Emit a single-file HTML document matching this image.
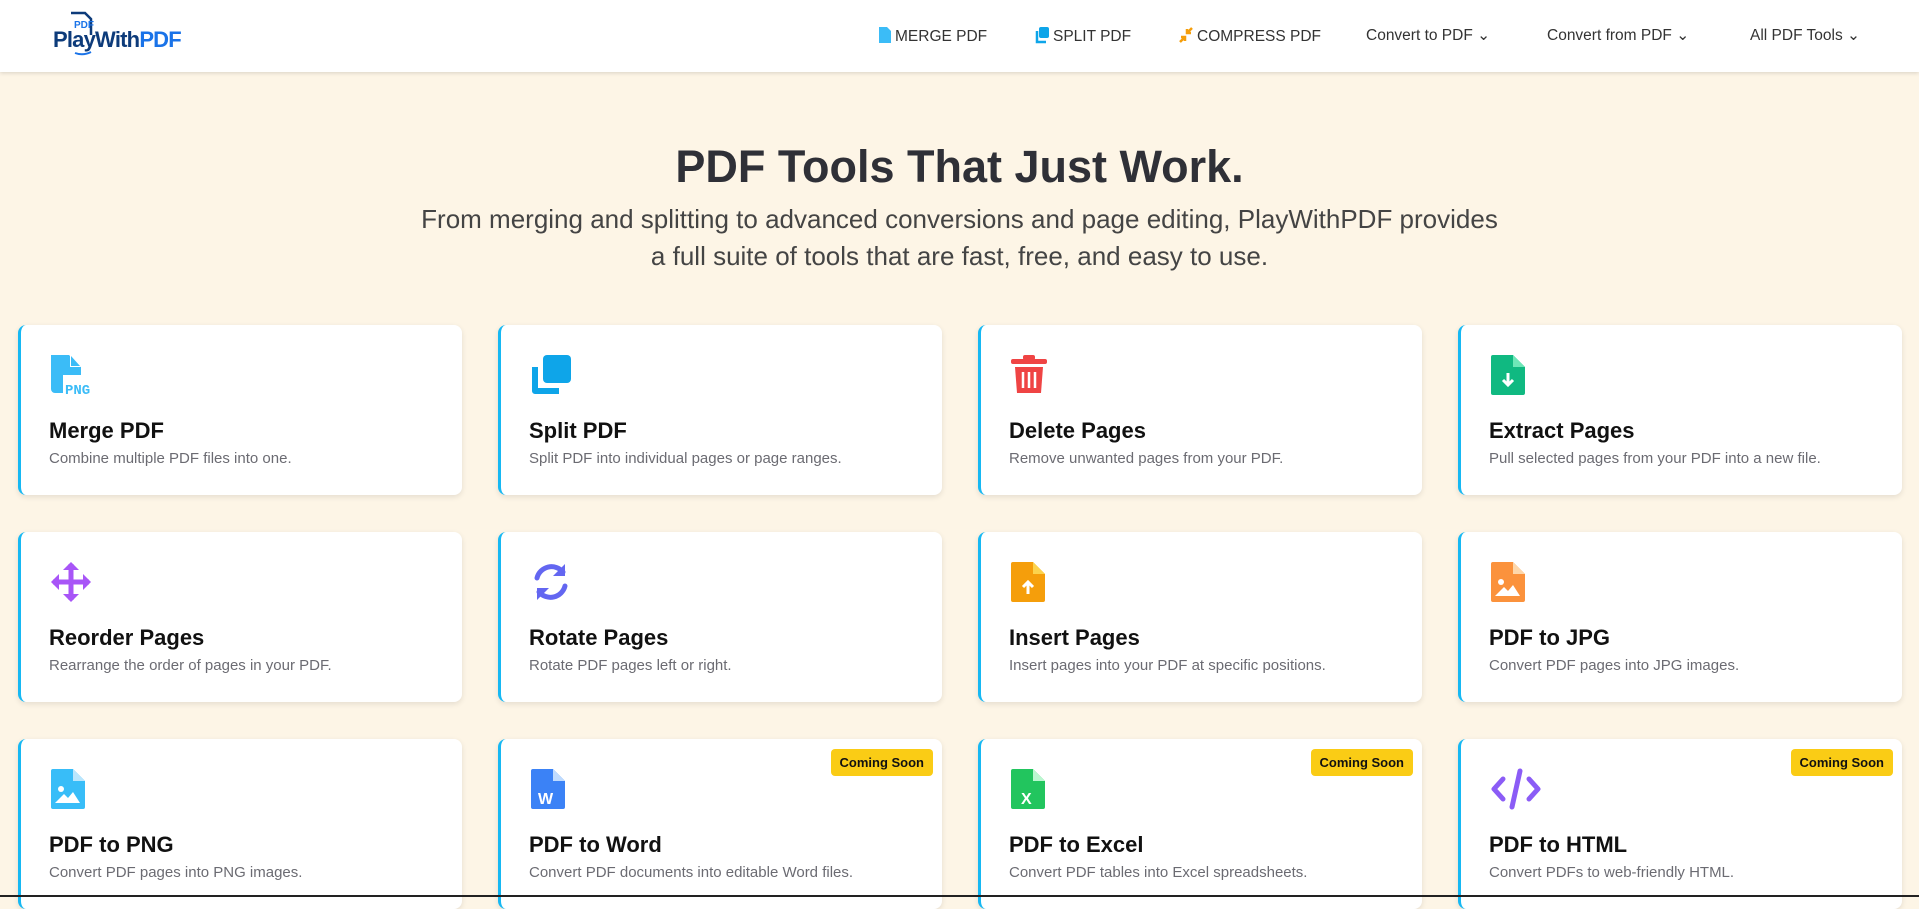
<!DOCTYPE html>
<html><head><meta charset="utf-8"><style>
*{box-sizing:border-box;margin:0;padding:0}
body{width:1919px;height:897px;overflow:hidden;background:#fdf5e6;font-family:"Liberation Sans",sans-serif;position:relative}
.hdr{position:absolute;left:0;top:0;width:1919px;height:72px;background:#fff;box-shadow:0 1px 4px rgba(0,0,0,.15);z-index:2}
.logo{position:absolute;left:53px;top:12px;height:46px}
.logo .t{position:absolute;left:0;top:15px;font-size:22px;font-weight:bold;color:#0d3b7a;letter-spacing:-0.8px;white-space:nowrap}
.logo .t span{color:#1a73e8}
.nav{position:absolute;top:26px;font-size:15.5px;color:#333;white-space:nowrap}
.nav svg{vertical-align:-3px;margin-right:3px}
h1{position:absolute;top:141px;width:100%;text-align:center;font-size:45px;color:#2f3037;font-weight:bold}
.sub{position:absolute;top:201px;width:100%;text-align:center;font-size:26px;line-height:37px;color:#444}
.card{position:absolute;width:444px;height:170px;background:#fff;border-radius:8px;border-left:3px solid #16b8f3;box-shadow:0 2px 6px rgba(0,0,0,.1)}
.card .ic{position:absolute;left:28px;top:28px;width:44px;height:44px}
.card h3{position:absolute;left:28px;top:93px;font-size:22px;color:#111;font-weight:bold}
.card p{position:absolute;left:28px;top:125px;font-size:15px;color:#6b6b72}
.badge{position:absolute;right:9px;top:10px;background:#facc15;border-radius:4px;font-size:13px;font-weight:bold;padding:6px 9px;color:#111}
</style></head><body>
<div class="hdr">
 <div class="logo">
  <svg width="40" height="50" style="position:absolute;left:12px;top:-3px"><path d="M6 4h14l6 6v16" fill="none" stroke="#0d3b7a" stroke-width="2.5"/><text x="9" y="19" font-size="10" font-weight="bold" fill="#1a73e8" font-family="Liberation Sans">PDF</text><path d="M10 44q8 3 16-1" fill="none" stroke="#1a73e8" stroke-width="2"/></svg>
  <div class="t">PlayWith<span>PDF</span></div>
 </div>
 <div class="nav" style="left:878px"><svg width="14" height="18"><path d="M1 1h8l4 4v12H1z" fill="#3bbcf7"/></svg>MERGE PDF</div>
 <div class="nav" style="left:1034px"><svg width="16" height="18"><rect x="5" y="1" width="10" height="11" rx="2" fill="#0ea5e9"/><path d="M3 5v11h9" fill="none" stroke="#0ea5e9" stroke-width="2.5"/></svg>SPLIT PDF</div>
 <div class="nav" style="left:1178px"><svg width="16" height="18"><path d="M14 2l-5 5M9 3v4h4M2 16l5-5M7 15v-4H3" fill="none" stroke="#f59e0b" stroke-width="2.5"/></svg>COMPRESS PDF</div>
 <div class="nav" style="left:1366px">Convert to PDF &#8964;</div>
 <div class="nav" style="left:1547px">Convert from PDF &#8964;</div>
 <div class="nav" style="left:1750px">All PDF Tools &#8964;</div>
</div>
<h1>PDF Tools That Just Work.</h1>
<div class="sub">From merging and splitting to advanced conversions and page editing, PlayWithPDF provides<br>a full suite of tools that are fast, free, and easy to use.</div>

<div class="card" style="left:18px;top:325px"><svg class="ic" viewBox="0 0 44 44"><path d="M2 2h18l12 12v8H14v18H6a4 4 0 0 1-4-4z" fill="#3bbcf7"/><path d="M21 2v12h11z" fill="#fff"/><path d="M22 3v10h9z" fill="#3bbcf7"/><text x="16" y="41" font-size="14" font-weight="bold" fill="#3bbcf7" font-family="Liberation Mono">PNG</text></svg><h3>Merge PDF</h3><p>Combine multiple PDF files into one.</p></div>
<div class="card" style="left:498px;top:325px"><svg class="ic" viewBox="0 0 44 44"><rect x="14" y="2" width="28" height="28" rx="4" fill="#0ea5e9"/><path d="M6 14v24h24" fill="none" stroke="#0ea5e9" stroke-width="6" stroke-linejoin="round"/></svg><h3>Split PDF</h3><p>Split PDF into individual pages or page ranges.</p></div>
<div class="card" style="left:978px;top:325px"><svg class="ic" viewBox="0 0 44 44"><rect x="2" y="6" width="36" height="5" rx="2" fill="#ef4444"/><rect x="14" y="2" width="12" height="5" rx="2" fill="#ef4444"/><path d="M6 14h28l-2 26H8z" fill="#ef4444"/><path d="M14 19v16M20 19v16M26 19v16" stroke="#fff" stroke-width="2.5"/></svg><h3>Delete Pages</h3><p>Remove unwanted pages from your PDF.</p></div>
<div class="card" style="left:1458px;top:325px"><svg class="ic" viewBox="0 0 44 44"><path d="M4 2h20l12 12v26a2 2 0 0 1-2 2H4a2 2 0 0 1-2-2V4a2 2 0 0 1 2-2z" fill="#10b981"/><path d="M24 2v12h12" fill="#6ee7b7"/><path d="M19 20v12M14 27l5 5 5-5" fill="none" stroke="#fff" stroke-width="3"/></svg><h3>Extract Pages</h3><p>Pull selected pages from your PDF into a new file.</p></div>

<div class="card" style="left:18px;top:532px"><svg class="ic" viewBox="0 0 44 44"><path d="M22 4v36M4 22h36" stroke="#a855f7" stroke-width="5"/><path d="M14 10l8-8 8 8zM14 34l8 8 8-8zM10 14l-8 8 8 8zM34 14l8 8-8 8z" fill="#a855f7"/></svg><h3>Reorder Pages</h3><p>Rearrange the order of pages in your PDF.</p></div>
<div class="card" style="left:498px;top:532px"><svg class="ic" viewBox="0 0 44 44"><path d="M8 18a15 15 0 0 1 26-6M36 26a15 15 0 0 1-26 6" fill="none" stroke="#6366f1" stroke-width="5" stroke-linecap="round"/><path d="M36 4v12H24zM8 40V28h12z" fill="#6366f1"/></svg><h3>Rotate Pages</h3><p>Rotate PDF pages left or right.</p></div>
<div class="card" style="left:978px;top:532px"><svg class="ic" viewBox="0 0 44 44"><path d="M4 2h20l12 12v26a2 2 0 0 1-2 2H4a2 2 0 0 1-2-2V4a2 2 0 0 1 2-2z" fill="#f59e0b"/><path d="M24 2v12h12" fill="#fcd34d"/><path d="M19 34V22M14 27l5-5 5 5" fill="none" stroke="#fff" stroke-width="3"/></svg><h3>Insert Pages</h3><p>Insert pages into your PDF at specific positions.</p></div>
<div class="card" style="left:1458px;top:532px"><svg class="ic" viewBox="0 0 44 44"><path d="M4 2h20l12 12v26a2 2 0 0 1-2 2H4a2 2 0 0 1-2-2V4a2 2 0 0 1 2-2z" fill="#fb923c"/><path d="M24 2v12h12" fill="#fed7aa"/><circle cx="12" cy="22" r="3" fill="#fff"/><path d="M6 36l9-9 4 4 5-6 7 11z" fill="#fff"/></svg><h3>PDF to JPG</h3><p>Convert PDF pages into JPG images.</p></div>

<div class="card" style="left:18px;top:739px"><svg class="ic" viewBox="0 0 44 44"><path d="M4 2h20l12 12v26a2 2 0 0 1-2 2H4a2 2 0 0 1-2-2V4a2 2 0 0 1 2-2z" fill="#38bdf8"/><path d="M24 2v12h12" fill="#bae6fd"/><circle cx="12" cy="22" r="3" fill="#fff"/><path d="M6 36l9-9 4 4 5-6 7 11z" fill="#fff"/></svg><h3>PDF to PNG</h3><p>Convert PDF pages into PNG images.</p></div>
<div class="card" style="left:498px;top:739px"><span class="badge">Coming Soon</span><svg class="ic" viewBox="0 0 44 44"><path d="M4 2h20l12 12v26a2 2 0 0 1-2 2H4a2 2 0 0 1-2-2V4a2 2 0 0 1 2-2z" fill="#3b82f6"/><path d="M24 2v12h12" fill="#bfdbfe"/><text x="9" y="37" font-size="16" font-weight="bold" fill="#fff" font-family="Liberation Sans">W</text></svg><h3>PDF to Word</h3><p>Convert PDF documents into editable Word files.</p></div>
<div class="card" style="left:978px;top:739px"><span class="badge">Coming Soon</span><svg class="ic" viewBox="0 0 44 44"><path d="M4 2h20l12 12v26a2 2 0 0 1-2 2H4a2 2 0 0 1-2-2V4a2 2 0 0 1 2-2z" fill="#22c55e"/><path d="M24 2v12h12" fill="#bbf7d0"/><text x="12" y="37" font-size="16" font-weight="bold" fill="#fff" font-family="Liberation Sans">X</text></svg><h3>PDF to Excel</h3><p>Convert PDF tables into Excel spreadsheets.</p></div>
<div class="card" style="left:1458px;top:739px"><span class="badge">Coming Soon</span><svg class="ic" viewBox="0 0 54 44" style="width:54px"><path d="M14 12l-9 10 9 10M40 12l9 10-9 10M31 4l-8 36" fill="none" stroke="#8b5cf6" stroke-width="5" stroke-linecap="round" stroke-linejoin="round"/></svg><h3>PDF to HTML</h3><p>Convert PDFs to web-friendly HTML.</p></div>
<div style="position:absolute;left:0;top:895px;width:1919px;height:2px;background:#222"></div>
</body></html>
